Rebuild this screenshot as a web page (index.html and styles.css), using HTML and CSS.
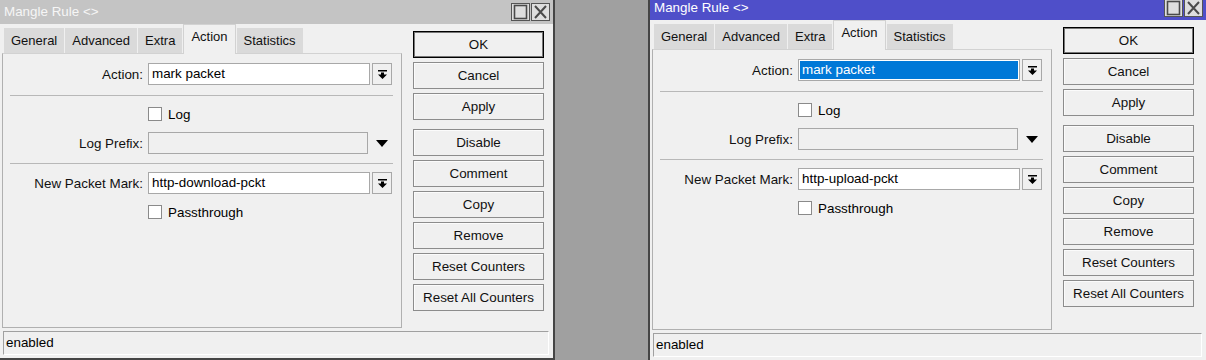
FILE: index.html
```html
<!DOCTYPE html>
<html>

<head>
    <meta charset="utf-8">
    <title>Mangle Rule</title>
    <link rel="stylesheet" href="styles.css">
</head>

<body>
    <div class="desk">
        <div class="win win-left">
            <div class="titlebar">
                <span class="title">Mangle Rule &lt;&gt;</span>
                <div class="caption-btns">
                    <span class="cap-btn"><svg width="19" height="18" viewBox="0 0 19 18"><rect x="3.5" y="2.5" width="12" height="13" fill="none" stroke="#4a4a4a" stroke-width="1.6"/></svg></span>
                    <span class="cap-btn"><svg width="19" height="18" viewBox="0 0 19 18"><path d="M4 3l11 12M15 3L4 15" stroke="#4a4a4a" stroke-width="2" fill="none"/></svg></span>
                </div>
            </div>
            <div class="win-body">
                <div class="tabbed">
                    <div class="tabs">
                        <span class="tab">General</span>
                        <span class="tab">Advanced</span>
                        <span class="tab">Extra</span>
                        <span class="tab active">Action</span>
                        <span class="tab">Statistics</span>
                    </div>
                    <div class="panel">
                        <div class="row">
                            <span class="lbl">Action:</span>
                            <span class="field">mark packet</span>
                            <span class="drop"><svg width="9" height="9" viewBox="0 0 9 9"><path d="M0 0h9v1.4H0z M3 2.4h3v2.2h3L4.5 9 0 4.6h3z"/></svg></span>
                        </div>
                        <div class="sep"></div>
                        <div class="row">
                            <span class="lbl"></span>
                            <span class="check"></span>
                            <span>Log</span>
                        </div>
                        <div class="row">
                            <span class="lbl">Log Prefix:</span>
                            <span class="field off"></span>
                            <span class="arrow"><svg width="12" height="7" viewBox="0 0 12 7"><path d="M0 0h12L6 7z"/></svg></span>
                        </div>
                        <div class="sep sep-b"></div>
                        <div class="row">
                            <span class="lbl">New Packet Mark:</span>
                            <span class="field">http-download-pckt</span>
                            <span class="drop"><svg width="9" height="9" viewBox="0 0 9 9"><path d="M0 0h9v1.4H0z M3 2.4h3v2.2h3L4.5 9 0 4.6h3z"/></svg></span>
                        </div>
                        <div class="row">
                            <span class="lbl"></span>
                            <span class="check"></span>
                            <span>Passthrough</span>
                        </div>
                    </div>
                </div>
                <div class="actions">
                    <span class="btn default">OK</span>
                    <span class="btn">Cancel</span>
                    <span class="btn">Apply</span>
                    <span class="btn group">Disable</span>
                    <span class="btn">Comment</span>
                    <span class="btn">Copy</span>
                    <span class="btn">Remove</span>
                    <span class="btn">Reset Counters</span>
                    <span class="btn">Reset All Counters</span>
                </div>
            </div>
            <div class="status">enabled</div>
        </div>

        <div class="win win-right">
            <div class="titlebar">
                <span class="title">Mangle Rule &lt;&gt;</span>
                <div class="caption-btns">
                    <span class="cap-btn"><svg width="19" height="18" viewBox="0 0 19 18"><rect x="3.5" y="2.5" width="12" height="13" fill="none" stroke="#4a4a4a" stroke-width="1.6"/></svg></span>
                    <span class="cap-btn"><svg width="19" height="18" viewBox="0 0 19 18"><path d="M4 3l11 12M15 3L4 15" stroke="#4a4a4a" stroke-width="2" fill="none"/></svg></span>
                </div>
            </div>
            <div class="win-body">
                <div class="tabbed">
                    <div class="tabs">
                        <span class="tab">General</span>
                        <span class="tab">Advanced</span>
                        <span class="tab">Extra</span>
                        <span class="tab active">Action</span>
                        <span class="tab">Statistics</span>
                    </div>
                    <div class="panel">
                        <div class="row">
                            <span class="lbl">Action:</span>
                            <span class="field selected">mark packet</span>
                            <span class="drop"><svg width="9" height="9" viewBox="0 0 9 9"><path d="M0 0h9v1.4H0z M3 2.4h3v2.2h3L4.5 9 0 4.6h3z"/></svg></span>
                        </div>
                        <div class="sep"></div>
                        <div class="row">
                            <span class="lbl"></span>
                            <span class="check"></span>
                            <span>Log</span>
                        </div>
                        <div class="row">
                            <span class="lbl">Log Prefix:</span>
                            <span class="field off"></span>
                            <span class="arrow"><svg width="12" height="7" viewBox="0 0 12 7"><path d="M0 0h12L6 7z"/></svg></span>
                        </div>
                        <div class="sep sep-b"></div>
                        <div class="row">
                            <span class="lbl">New Packet Mark:</span>
                            <span class="field">http-upload-pckt</span>
                            <span class="drop"><svg width="9" height="9" viewBox="0 0 9 9"><path d="M0 0h9v1.4H0z M3 2.4h3v2.2h3L4.5 9 0 4.6h3z"/></svg></span>
                        </div>
                        <div class="row">
                            <span class="lbl"></span>
                            <span class="check"></span>
                            <span>Passthrough</span>
                        </div>
                    </div>
                </div>
                <div class="actions">
                    <span class="btn default">OK</span>
                    <span class="btn">Cancel</span>
                    <span class="btn">Apply</span>
                    <span class="btn group">Disable</span>
                    <span class="btn">Comment</span>
                    <span class="btn">Copy</span>
                    <span class="btn">Remove</span>
                    <span class="btn">Reset Counters</span>
                    <span class="btn">Reset All Counters</span>
                </div>
            </div>
            <div class="status">enabled</div>
        </div>
    </div>
</body>

</html>
```

FILE: styles.css
```css
* {
    box-sizing: border-box;
}

body {
    margin: 0;
    width: 1206px;
    height: 360px;
    overflow: hidden;
    background: #a0a0a0;
    font-family: "Liberation Sans", Arial, sans-serif;
    font-size: 13.4px;
    color: #000;
}

.desk {
    display: flex;
    align-items: flex-start;
    gap: 93px;
}

.win {
    flex-shrink: 0;
    display: flex;
    flex-direction: column;
    background: #f0f0f0;
    border: 2px solid #454545;
}

.win-left {
    width: 557px;
    height: 362px;
    margin: -2px 0 0 -2px;
}

.win-right {
    width: 560px;
    height: 368px;
    margin-top: -6px;
}

.titlebar {
    display: flex;
    justify-content: space-between;
    height: 24px;
    background: #c4c4c4;
    color: #f6f6f6;
}

.win-right .titlebar {
    background: #4f4fc9;
    color: #fff;
}

.title {
    padding-left: 4px;
    line-height: 24px;
}

.caption-btns {
    display: flex;
    gap: 1px;
    margin: 3px 3px 0 0;
}

.cap-btn {
    display: block;
    width: 19px;
    height: 18px;
    background: #dedede;
    border: 1px solid #555;
}

.cap-btn svg {
    display: block;
    margin: -1px;
}

.win-body {
    flex: 1;
    display: flex;
    padding-left: 2px;
}

.tabbed {
    width: 400px;
    display: flex;
    flex-direction: column;
}

.tabs {
    display: flex;
    align-items: flex-end;
    height: 29px;
    padding-left: 2px;
    font-size: 13px;
}

.tab {
    height: 25px;
    line-height: 25px;
    padding: 0 7px;
    margin-right: 1px;
    background: #dadada;
    color: #111;
}

.tab.active {
    position: relative;
    z-index: 1;
    height: 30px;
    line-height: 23px;
    margin-bottom: -1px;
    background: #f0f0f0;
    border: 1px solid #d2d2d2;
    border-bottom: none;
}

.panel {
    flex: 1;
    display: flex;
    flex-direction: column;
    padding-top: 9px;
    border: 1px solid #b0b0b0;
    border-top-color: #d2d2d2;
}

.row {
    display: flex;
    align-items: center;
    height: 22px;
}

.row + .row {
    margin-top: 7px;
}

.lbl {
    width: 140px;
    margin-right: 5px;
    text-align: right;
    color: #111;
}

.field {
    width: 222px;
    height: 22px;
    padding-left: 3px;
    line-height: 20px;
    background: #fff;
    border: 1px solid #a8a8a8;
}

.field.off {
    width: 220px;
    background: #f0f0f0;
}

.field.selected {
    background: #0078d7;
    color: #fff;
    box-shadow: inset 0 0 0 1px #fff;
}

.drop {
    display: flex;
    align-items: center;
    justify-content: center;
    width: 20px;
    height: 22px;
    margin-left: 2px;
    background: #f0f0f0;
    border: 1px solid #a8a8a8;
}

.arrow {
    display: flex;
    justify-content: center;
    width: 24px;
    padding-left: 4px;
}

.check {
    width: 14px;
    height: 14px;
    margin-right: 6px;
    background: #fff;
    border: 1px solid #8a8a8a;
}

.sep {
    height: 1px;
    margin: 10px 8px 7px 7px;
    background: #b8b8b8;
}

.sep-b {
    margin: 9px 8px 8px 7px;
}

.actions {
    display: flex;
    flex-direction: column;
    gap: 4px;
    width: 131px;
    margin: 7px 0 0 11px;
}

.btn {
    height: 27px;
    line-height: 25px;
    text-align: center;
    background: #f0f0f0;
    border: 1px solid #8c8c8c;
    box-shadow: inset 1px 1px #fbfbfb;
    color: #111;
}

.btn.default {
    border-color: #000;
    box-shadow: inset 0 0 0 1px #777;
}

.btn.group {
    margin-top: 5px;
}

.status {
    height: 24px;
    margin: 3px 4px 3px 3px;
    padding-left: 2px;
    line-height: 22px;
    border: 1px solid;
    border-color: #a0a0a0 #fff #fff #a0a0a0;
}
```
